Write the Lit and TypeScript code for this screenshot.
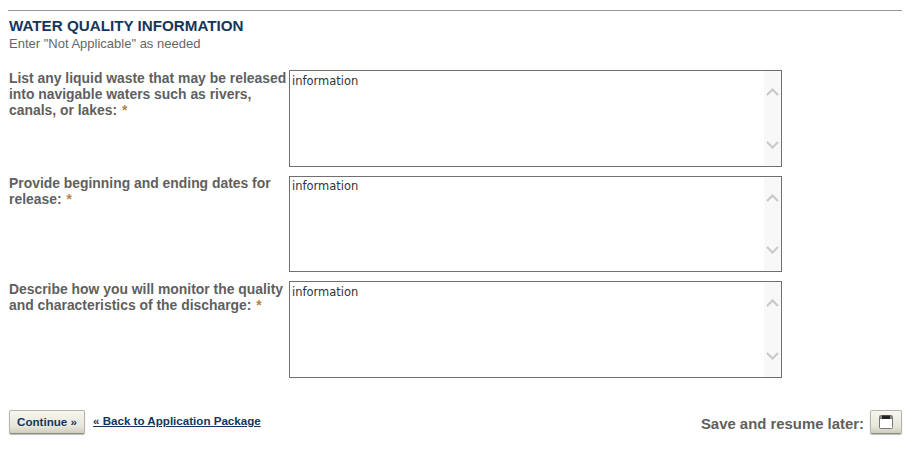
import { LitElement, html, css } from "lit";
import { customElement } from "lit/decorators.js";

const fields = [
  "List any liquid waste that may be released into navigable waters such as rivers, canals, or lakes:",
  "Provide beginning and ending dates for release:",
  "Describe how you will monitor the quality and characteristics of the discharge:",
];

@customElement("app-root")
export class AppRoot extends LitElement {
  static styles = css`
    :host { display: block; width: 918px; height: 450px; background: #fff; font-family: "Liberation Sans", Arial, sans-serif; overflow: hidden; }
    .page { padding: 10px 16px 0 8px; display: flex; flex-direction: column; }
    .rule { height: 1px; background: #999; }
    h2 { margin: 7px 0 0 1px; font-size: 15.2px; line-height: 16px; font-weight: bold; color: #14365a; }
    .hint { margin: 2px 0 0 1px; font-size: 13px; line-height: 16px; color: #666; }
    .rows { margin-top: 18px; display: flex; flex-direction: column; gap: 9px; }
    .row { display: flex; align-items: flex-start; }
    .label { box-sizing: border-box; width: 281px; padding: 0 0 0 1px; font-size: 13.9px; line-height: 16px; font-weight: bold; color: #5f5f5f; }
    .row:nth-child(2) .label { margin-top: -1px; }
    .req { color: #b5824a; margin-left: 1px; }
    .box { box-sizing: border-box; width: 493px; height: 97px; border: 1px solid #707070; display: flex; justify-content: space-between; }
    .row:nth-child(2) .box { height: 96px; }
    .text { padding: 2px 0 0 2px; font-family: "DejaVu Sans", sans-serif; font-size: 11.5px; line-height: 16px; color: #333; }
    .row:nth-child(2) .text { padding-top: 1px; }
    .bar { width: 17px; background: #f8f8f8; display: flex; flex-direction: column; justify-content: space-between; align-items: center; padding: 17px 0 17px; box-sizing: border-box; }
    .bar svg { display: block; }
    .footer { margin-top: 32px; display: flex; justify-content: space-between; align-items: flex-start; padding-left: 1px; }
    .left { display: flex; align-items: flex-start; gap: 8px; }
    button { box-sizing: border-box; font-family: inherit; font-weight: bold; color: #14365a; border: 1px solid #b5b4a8; border-bottom-color: #8d8c80; border-radius: 2px; background: linear-gradient(#f7f6ef, #e8e6d9 70%, #cfcdbf); box-shadow: 0 1px 1px #bbb; padding: 0; }
    .cont { width: 76px; height: 24px; font-size: 11.6px; padding-bottom: 2px; }
    a { margin-top: 3px; font-size: 11.6px; line-height: 15px; font-weight: bold; color: #14365a; text-decoration: underline; }
    .right { display: flex; align-items: center; gap: 6px; }
    .save { font-size: 14.9px; font-weight: bold; color: #5f5f5f; padding-top: 4px; }
    .disk { width: 32px; height: 24px; display: flex; align-items: center; justify-content: center; }
  `;

  render() {
    return html`<div class="page">
      <div class="rule"></div>
      <h2>WATER QUALITY INFORMATION</h2>
      <div class="hint">Enter "Not Applicable" as needed</div>
      <div class="rows">
        ${fields.map(
          (f) => html`<div class="row">
            <div class="label">${f} <span class="req">*</span></div>
            <div class="box">
              <div class="text">information</div>
              <div class="bar">
                <svg width="13" height="8" viewBox="0 0 13 8"><path d="M1 7 L6.5 1.5 L12 7" fill="none" stroke="#c9c9c9" stroke-width="2.2"/></svg>
                <svg width="13" height="8" viewBox="0 0 13 8"><path d="M1 1 L6.5 6.5 L12 1" fill="none" stroke="#c9c9c9" stroke-width="2.2"/></svg>
              </div>
            </div>
          </div>`
        )}
      </div>
      <div class="footer">
        <div class="left">
          <button class="cont">Continue »</button>
          <a href="#">« Back to Application Package</a>
        </div>
        <div class="right">
          <span class="save">Save and resume later:</span>
          <button class="disk" aria-label="Save">
            <svg width="14" height="14" viewBox="0 0 14 14"><rect x="0.5" y="0.5" width="13" height="13" rx="1" fill="#fff" stroke="#777"/><rect x="1" y="1" width="12" height="3" fill="#888"/><rect x="3" y="0.5" width="8" height="3.5" fill="#222"/></svg>
          </button>
        </div>
      </div>
    </div>`;
  }
}
